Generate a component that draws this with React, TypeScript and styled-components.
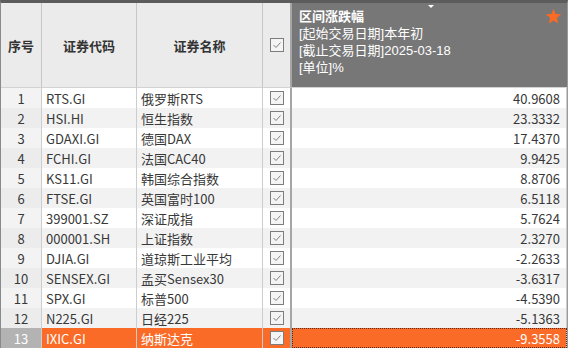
import React from "react";
import styled, { createGlobalStyle, css } from "styled-components";

const rows: [string, string, string][] = [
  ["RTS.GI", "俄罗斯RTS", "40.9608"],
  ["HSI.HI", "恒生指数", "23.3332"],
  ["GDAXI.GI", "德国DAX", "17.4370"],
  ["FCHI.GI", "法国CAC40", "9.9425"],
  ["KS11.GI", "韩国综合指数", "8.8706"],
  ["FTSE.GI", "英国富时100", "6.5118"],
  ["399001.SZ", "深证成指", "5.7624"],
  ["000001.SH", "上证指数", "2.3270"],
  ["DJIA.GI", "道琼斯工业平均", "-2.2633"],
  ["SENSEX.GI", "孟买Sensex30", "-3.6317"],
  ["SPX.GI", "标普500", "-4.5390"],
  ["N225.GI", "日经225", "-5.1363"],
  ["IXIC.GI", "纳斯达克", "-9.3558"],
];

const Global = createGlobalStyle`
  body {
    margin: 0;
    background: #ffffff;
    font-family: "Noto Sans CJK SC", "Noto Sans", sans-serif;
    font-size: 13px;
    color: #383838;
  }
`;

const Frame = styled.div`
  width: 571px;
  height: 351px;
  overflow: hidden;
  background: #ffffff;
`;

const Table = styled.div`
  width: 566px;
  border-top: 3px solid #5c5c5c;
  border-left: 1px solid #8a8a8a;
  border-right: 1px solid #9a9a9a;
  display: grid;
  grid-template-columns: 41px 95px 126px 29px 275px;
  grid-auto-rows: 20px;
  grid-template-rows: 85px;
`;

const HeadCell = styled.div`
  background: #ebebeb;
  border-right: 1px solid #c6c6c6;
  border-bottom: 1px solid #d2d2d2;
  display: flex;
  align-items: center;
  justify-content: center;
  font-weight: bold;
  color: #333;
  font-size: 13px;
`;

const CheckHead = styled(HeadCell)`
  border-right: 2px solid #a6a6a6;
`;

const ValueHead = styled.div`
  position: relative;
  background: #777777;
  color: #ffffff;
  padding: 5px 0 0 7px;
  font-family: "Liberation Sans", "Noto Sans CJK SC", sans-serif;
  font-size: 13px;
  border-bottom: 1px solid #d2d2d2;
`;

const Line = styled.div<{ $bold?: boolean }>`
  height: 17px;
  line-height: 17px;
  font-weight: ${(p) => (p.$bold ? "bold" : "normal")};
`;

const Star = styled.svg`
  position: absolute;
  right: 5px;
  top: 5px;
`;

const Notch = styled.span`
  position: absolute;
  left: 136px;
  top: 2px;
  width: 0;
  height: 0;
  border-left: 3px solid transparent;
  border-right: 3px solid transparent;
  border-top: 3px solid #ffffff;
`;

const Cell = styled.div<{ $even: boolean; $sel: boolean }>`
  background: ${(p) => (p.$even ? "#f2f2f2" : "#ffffff")};
  border-right: 1px solid #cdcdcd;
  display: flex;
  align-items: center;
  padding: 0 4px;
  white-space: nowrap;
  font-size: 13px;
  ${(p) =>
    p.$sel &&
    css`
      background: #fa6b27;
      color: #ffffff;
    `}
`;

const NumCell = styled(Cell)`
  justify-content: center;
  background: ${(p) => (p.$sel ? "#b3b3b3" : p.$even ? "#ececec" : "#f3f3f3")};
`;

const CheckCell = styled(Cell)`
  justify-content: center;
  padding: 0;
  border-right: 2px solid #a6a6a6;
`;

const ValueCell = styled(Cell)`
  justify-content: flex-end;
  padding-right: 6px;
  ${(p) =>
    p.$sel &&
    css`
      outline: 1px dotted #5a2a10;
      outline-offset: -1px;
    `}
`;

const Box = styled.span`
  width: 12px;
  height: 12px;
  border: 1px solid #7d7d7d;
  background: #f4f4f4;
  display: flex;
  align-items: center;
  justify-content: center;
`;

function Check() {
  return (
    <Box>
      <svg width="10" height="10" viewBox="0 0 10 10">
        <path d="M1.5 5 L4 7.5 L8.5 2.5" fill="none" stroke="#808080" strokeWidth="1" />
      </svg>
    </Box>
  );
}

export default function App() {
  return (
    <Frame>
      <Global />
      <Table>
        <HeadCell>序号</HeadCell>
        <HeadCell>证券代码</HeadCell>
        <HeadCell>证券名称</HeadCell>
        <CheckHead>
          <Check />
        </CheckHead>
        <ValueHead>
          <Notch />
          <Line $bold>区间涨跌幅</Line>
          <Line>[起始交易日期]本年初</Line>
          <Line>[截止交易日期]2025-03-18</Line>
          <Line>[单位]%</Line>
          <Star width="17" height="17" viewBox="0 0 24 24">
            <path
              d="M12 1 L14.9 8.4 L22.8 8.9 L16.7 14 L18.7 21.8 L12 17.5 L5.3 21.8 L7.3 14 L1.2 8.9 L9.1 8.4 Z"
              fill="#fa6a24"
            />
          </Star>
        </ValueHead>
        {rows.map(([code, name, val], i) => {
          const even = i % 2 === 1;
          const sel = i === rows.length - 1;
          return (
            <React.Fragment key={code}>
              <NumCell $even={even} $sel={sel}>{i + 1}</NumCell>
              <Cell $even={even} $sel={sel}>{code}</Cell>
              <Cell $even={even} $sel={sel}>{name}</Cell>
              <CheckCell $even={even} $sel={sel}>
                <Check />
              </CheckCell>
              <ValueCell $even={even} $sel={sel}>{val}</ValueCell>
            </React.Fragment>
          );
        })}
      </Table>
    </Frame>
  );
}
